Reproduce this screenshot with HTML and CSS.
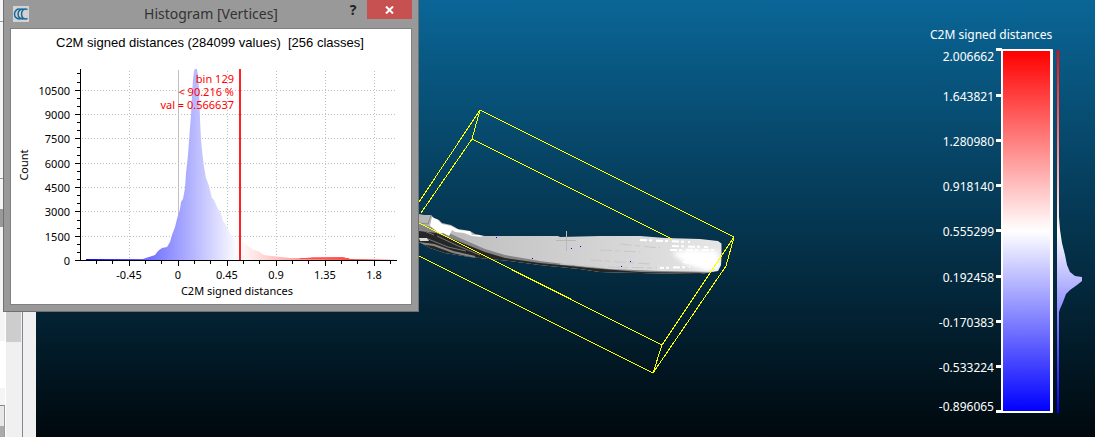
FILE: index.html
```html
<!DOCTYPE html>
<html lang="en">
<head>
<meta charset="utf-8">
<title>Histogram [Vertices]</title>
<link rel="stylesheet" href="styles.css">
</head>
<body>
<div class="app">
  <aside class="side">
    <div class="tree"><div class="row line"></div><div class="row line"></div><div class="row dark"></div><div class="row tail"></div><div class="row white"></div><div class="row plain"></div><div class="row corner"></div></div>
    <div class="track"><div class="thumb"></div></div>
    <div class="splitter"></div>
  </aside>
  <main class="viewport">
    <svg class="scene" width="720" height="437" viewBox="36 0 720 437" aria-label="Bone mesh with bounding box">
      <defs>
        <linearGradient id="bone" gradientUnits="userSpaceOnUse" x1="419" y1="0" x2="722" y2="0">
          <stop offset="0" stop-color="#b4b4b4"/><stop offset=".25" stop-color="#c5c5c5"/><stop offset=".7" stop-color="#d8d8d8"/><stop offset="1" stop-color="#e6e6e6"/>
        </linearGradient>
        <filter id="soft" x="-20%" y="-40%" width="140%" height="180%"><feGaussianBlur stdDeviation="2"/></filter>
        <filter id="fine" x="-10%" y="-30%" width="120%" height="160%"><feGaussianBlur stdDeviation=".6"/></filter>
        <clipPath id="boneclip"><path d="M419 214L424 215L431 215L434 218L439 220L442 223L451 225L458 229L470 231L475 234L485 236L558 236L560 237L600 236L640 236L665 238L700 239L718 241L722 244L721 265L718 271L700 274L640 273L600 272L580 269L540 265L510 261L470 257L445 253L430 248L419 242Z"/></clipPath>
      </defs>
      <g clip-path="url(#boneclip)">
        <rect x="419" y="210" width="306" height="68" fill="url(#bone)"/>
        <path filter="url(#fine)" fill="#858585" d="M419 224L440 229L462 239L485 249L505 255L540 261L580 266L610 269L660 271L720 272V280H419Z"/>
        <path filter="url(#fine)" fill="#282828" d="M419 231L436 233L455 240L485 252L505 258L540 263L590 268L640 272L715 273V280H480L419 270Z"/>
        <path filter="url(#fine)" fill="none" stroke="#888" stroke-width="2" d="M419 243L434 245L453 252L475 257"/>
        <path filter="url(#fine)" fill="none" stroke="#777" d="M437 236L456 245L480 255M424 231L434 235M428 239L448 247L466 251"/>
        <path filter="url(#fine)" fill="#ddd" d="M419 238L427 238L429 241L420 241Z"/>
        <path fill="#fff" d="M432 217L437 219L442 224L451 226L459 230L470 231L472 235L480 235L483 237L472 236L464 233L455 232L452 230L449 236L443 233L440 234L430 226Z"/>
        <path fill="none" stroke="#888" d="M431 215L428 224L419 223"/>
        <path filter="url(#soft)" fill="#fff" d="M672 253L690 249L718 251L720 268L706 271L685 264Z"/>
        <path filter="url(#fine)" fill="none" stroke="#fff" stroke-width="2" stroke-dasharray="7 2 3 4" d="M640 240L690 242M672 246L708 247M670 250L715 250M657 268L690 267M683 262L716 266"/>
        <path fill="none" stroke="#c8c8c8" stroke-dasharray="12 3 5 4" d="M560 264L600 267L660 268M590 260L650 264M620 244L660 248M600 250L640 252"/>
        <path fill="none" stroke="#777" d="M721.500 244V264"/>
      </g>
      <path class="cursor" d="M556 240.500H576M566.500 231V251"/>
      <path class="dots" d="M496 237h1v1h-1zM532 258h1v1h-1zM571 248h1v1h-1zM580 246h1v1h-1zM630 261h1v1h-1zM621 266h1v1h-1z"/>
      <path class="box" d="M419 202L480 110L734 237L662 345L419 223M421 213L472 139L672 239M480 110L472 139M734 237L726 266L653 373L419 256M662 345L653 373"/>
    </svg>
    <svg class="legend" width="175" height="437" viewBox="920 0 175 437" aria-label="Colour scale">
      <defs>
        <linearGradient id="scale" gradientUnits="userSpaceOnUse" x1="0" y1="51" x2="0" y2="411">
          <stop offset="0" stop-color="#f00"/><stop offset=".5" stop-color="#fff"/><stop offset="1" stop-color="#00f"/>
        </linearGradient>
      </defs>
      <text x="930" y="39">C2M signed distances</text>
      <g text-anchor="end">
        <text x="994" y="61">2.006662</text><text x="994" y="101">1.643821</text><text x="994" y="146">1.280980</text><text x="994" y="191">0.918140</text><text x="994" y="236">0.555299</text><text x="994" y="282">0.192458</text><text x="994" y="327">-0.170383</text><text x="994" y="372">-0.533224</text><text x="994" y="411">-0.896065</text>
      </g>
      <path fill="#fff" d="M996 48h6v3h-6zM996 94h6v3h-6zM996 139h6v3h-6zM996 184h6v3h-6zM996 229h6v3h-6zM996 275h6v3h-6zM996 320h6v3h-6zM996 365h6v3h-6zM996 410h6v3h-6z"/>
      <rect x="1001" y="49" width="52" height="364" rx="1" fill="#fff"/>
      <rect x="1003" y="51" width="47" height="360" fill="url(#scale)"/>
      <path fill="url(#scale)" d="M1057 50H1059V217L1060 230L1062 243L1065 255L1067 265L1070 272L1075 276L1082 277V281L1077 285L1070 290L1066 294L1063 302L1060 309L1059 312V413H1057Z"/>
    </svg>
  </main>
  <section class="dialog" role="dialog" aria-labelledby="dlg-title">
    <header class="titlebar">
      <svg class="logo" width="16" height="16" viewBox="0 0 16 16" aria-hidden="true"><rect width="16" height="16" fill="#d2d2d2"/><path fill="none" stroke="#19699b" stroke-width="1.500" d="M8 3.500C4 2 1.500 5 1.500 8S4 14 8 12.500M11.500 3.500C7.500 2 5 5 5 8s2.500 6 6.500 4.500M14.500 3.500C10.500 2 8.500 5 8.500 8s2 6 6 4.500"/></svg>
      <h1 id="dlg-title">Histogram [Vertices]</h1>
      <button class="help" aria-label="Help">?</button>
      <button class="close" aria-label="Close"><svg width="9" height="8" viewBox="0 0 9 8"><path d="M1 0.500L8 7.500M8 0.500L1 7.500" stroke="#fff" stroke-width="2"/></svg></button>
    </header>
    <div class="plot">
      <svg class="chart" width="400" height="275" viewBox="11 29 400 275" aria-label="Histogram">
        <defs>
          <linearGradient id="hist" gradientUnits="userSpaceOnUse" x1="80" y1="0" x2="397" y2="0">
            <stop offset="0" stop-color="#00f"/><stop offset=".5" stop-color="#fff"/><stop offset="1" stop-color="#f00"/>
          </linearGradient>
        </defs>
        <text class="heading" x="56" y="47" xml:space="preserve">C2M signed distances (284099 values)  [256 classes]</text>
        <path class="grid" d="M82 90.500H397M82 114.500H397M82 138.500H397M82 163.500H397M82 187.500H397M82 211.500H397M82 236.500H397M129.500 71V260M227.500 71V260M276.500 71V260M325.500 71V260M374.500 71V260"/>
        <path stroke="#c0c0c0" d="M178.500 70V260"/>
        <path fill="url(#hist)" d="M86 260V259H143L149 257L155 255L158 251L162 248L167 247L170 242L172 235L175 227L177 219L180 209L181 202L183 199L185 188L186 173L188 155L189 141L190 128L191 115L192 95L193 80L194 71L195 69H197L198 75L199 88L200 119L201 140L202 150L204 167L206 178L209 186L212 198L214 200L218 209L221 213L223 221L226 225L230 233L234 238L239 240L243 242L248 246L254 250L258 251L264 255L272 256L290 258H305L313 257H343L350 259L397 260Z"/>
        <path stroke="#ff5050" d="M300 258.500H349"/>
        <path class="axis" d="M80.500 69V261M75 260.500H397M75 236.500H80M75 211.500H80M75 187.500H80M75 163.500H80M75 138.500H80M75 114.500H80M75 90.500H80M77 252.500H80M77 244.500H80M77 228.500H80M77 220.500H80M77 203.500H80M77 195.500H80M77 179.500H80M77 171.500H80M77 155.500H80M77 147.500H80M77 130.500H80M77 122.500H80M77 106.500H80M77 98.500H80M77 82.500H80M77 73.500H80M129.500 261V266M178.500 261V266M227.500 261V266M276.500 261V266M325.500 261V266M374.500 261V266M96.500 261V264M112.500 261V264M145.500 261V264M161.500 261V264M194.500 261V264M210.500 261V264M243.500 261V264M259.500 261V264M292.500 261V264M308.500 261V264M341.500 261V264M357.500 261V264M390.500 261V264"/>
        <path fill="#f22" d="M239 69h2v191h-2z"/>
        <g text-anchor="end">
          <text x="70" y="95">10500</text><text x="70" y="119">9000</text><text x="70" y="143">7500</text><text x="70" y="168">6000</text><text x="70" y="192">4500</text><text x="70" y="216">3000</text><text x="70" y="241">1500</text><text x="70" y="265">0</text>
        </g>
        <g text-anchor="middle">
          <text x="129" y="279">-0.45</text><text x="178" y="279">0</text><text x="227" y="279">0.45</text><text x="276" y="279">0.9</text><text x="325" y="279">1.35</text><text x="374" y="279">1.8</text>
          <text x="237" y="295">C2M signed distances</text>
          <text transform="translate(28 165) rotate(-90)">Count</text>
        </g>
        <g class="value" text-anchor="end"><text x="234" y="83">bin 129</text><text x="234" y="96">&lt; 90.216 %</text><text x="234" y="109">val = 0.566637</text></g>
      </svg>
    </div>
  </section>
</div>
</body>
</html>
```
FILE: styles.css
```css
* { box-sizing: border-box; }
body { margin: 0; font-family: "Noto Sans", sans-serif; }
.app { position: relative; display: flex; min-height: 100vh; overflow: hidden; }
.side { display: flex; flex: 0 0 36px; background: #f0f0f0; }
.tree { display: flex; flex-direction: column; width: 6px; border-right: 1px solid #fff; background: #f5f5f5; }
.line { height: 22px; border-bottom: 1px solid #999; }
.line + .line { height: 157px; }
.dark { height: 48px; border-top: 30px solid #f5f5f5; background: #999; }
.tail { height: 114px; }
.white { height: 47px; background: #fff; }
.plain { height: 17px; }
.corner { flex: 1; border-top: 1px solid #888; border-right: 1px solid #999; background: linear-gradient(#e8e8e8 20px, #aaa 20px); }
.track { width: 16px; }
.thumb { width: 15px; height: 342px; background: #cdcdcd; }
.splitter { width: 1px; background: #828790; }
.viewport { display: flex; flex: 1; justify-content: space-between; min-width: 0; background: linear-gradient(#0a6697, #00080d); }
.scene, .legend { flex: none; }
.legend text { font-size: 12px; fill: #fff; }
.box { fill: none; stroke: #ff0; shape-rendering: crispEdges; }
.cursor { stroke: #b8b8b8; }
.dots { fill: #00f; }
.dialog { position: absolute; top: 0; left: 3px; width: 416px; padding: 0 6px 6px; border: 1px solid #707070; border-top: 0; background: #999; }
.titlebar { display: flex; align-items: center; height: 28px; padding-left: 3px; }
.titlebar h1 { flex: 1; margin: 0; padding-left: 54px; font-size: 14px; font-weight: 400; line-height: 28px; text-align: center; color: #333; }
.titlebar button { align-self: flex-start; padding: 0; border: 0; font: inherit; }
.titlebar .help { width: 28px; height: 19px; background: transparent; font-size: 14px; font-weight: 700; line-height: 19px; color: #222; }
.titlebar .close { display: flex; align-items: center; justify-content: center; width: 45px; height: 19px; background: #c75050; }
.plot { border: 1px solid #808080; background: #fff; }
.chart { display: block; }
.chart text { font-size: 11px; fill: #000; }
.chart .heading { font-family: "Liberation Sans", Arial, sans-serif; font-size: 13px; }
.chart .value text { fill: #f00; }
.grid { stroke: #c0c0c0; stroke-dasharray: 1 2; }
.axis { stroke: #000; }
.grid, .axis { fill: none; shape-rendering: crispEdges; }
```
